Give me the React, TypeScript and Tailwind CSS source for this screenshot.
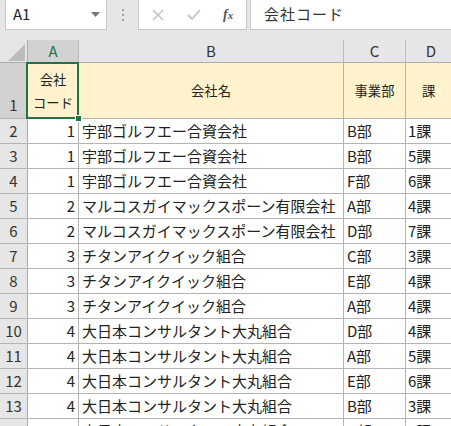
import React from 'react'

const font = { fontFamily: '"Noto Sans CJK JP", "Noto Sans", sans-serif' }

const rows = [
  ['1', '宇部ゴルフエー合資会社', 'B部', '1課'],
  ['1', '宇部ゴルフエー合資会社', 'B部', '5課'],
  ['1', '宇部ゴルフエー合資会社', 'F部', '6課'],
  ['2', 'マルコスガイマックスポーン有限会社', 'A部', '4課'],
  ['2', 'マルコスガイマックスポーン有限会社', 'D部', '7課'],
  ['3', 'チタンアイクイック組合', 'C部', '3課'],
  ['3', 'チタンアイクイック組合', 'E部', '4課'],
  ['3', 'チタンアイクイック組合', 'A部', '4課'],
  ['4', '大日本コンサルタント大丸組合', 'D部', '4課'],
  ['4', '大日本コンサルタント大丸組合', 'A部', '5課'],
  ['4', '大日本コンサルタント大丸組合', 'E部', '6課'],
  ['4', '大日本コンサルタント大丸組合', 'B部', '3課'],
  ['4', '大日本コンサルタント大丸組合', 'C部', '2課'],
]

const grid = 'grid grid-cols-[28px_51px_265px_62px_60px]'

export default function App() {
  return (
    <div className="w-[451px] h-[426px] overflow-hidden bg-[#e6e6e6] text-[#222]" style={font}>
      {/* formula bar */}
      <div className="flex h-[40px] items-start">
        <div className="ml-[5px] flex h-[30px] w-[102px] items-center justify-between border border-t-0 border-[#c6c6c6] bg-white pl-[7px] pr-[6px] text-[15px]">
          <span>A1</span>
          <svg width="9" height="5" viewBox="0 0 9 5">
            <path d="M0 0h9L4.5 5z" fill="#777" />
          </svg>
        </div>
        <div className="flex w-[31px] flex-col items-center gap-[3px] pt-[9px]">
          <span className="h-[2px] w-[2px] bg-[#a0a0a0]" />
          <span className="h-[2px] w-[2px] bg-[#a0a0a0]" />
          <span className="h-[2px] w-[2px] bg-[#a0a0a0]" />
        </div>
        <div className="flex h-[30px] w-[109px] items-center border border-t-0 border-[#c6c6c6] bg-white">
          <svg className="ml-[13px]" width="12" height="12" viewBox="0 0 12 12">
            <path d="M1 1l10 10M11 1L1 11" stroke="#c4c4c4" strokeWidth="1.6" />
          </svg>
          <svg className="ml-[23px]" width="14" height="11" viewBox="0 0 14 11">
            <path d="M1 6l4 4 8-9" stroke="#c4c4c4" strokeWidth="1.8" fill="none" />
          </svg>
          <span
            className="ml-[22px] text-[14px] italic text-[#555]"
            style={{ fontFamily: '"Liberation Serif", serif', fontWeight: 700 }}
          >
            f<span className="text-[11px]">x</span>
          </span>
        </div>
        <div className="ml-[3px] flex h-[30px] flex-1 items-center border border-t-0 border-r-0 border-[#c6c6c6] bg-white pl-[13px] text-[15px] tracking-[1px] text-[#333]">
          会社コード
        </div>
      </div>

      {/* column headers */}
      <div className={`${grid} h-[23px] border-b border-[#ababab] text-[15px]`}>
        <div className="relative border-r border-[#ababab]">
          <svg className="absolute left-[8px] top-[4px]" width="17" height="17" viewBox="0 0 17 17">
            <path d="M17 0V17H0z" fill="#bcbcbc" />
          </svg>
        </div>
        <div className="flex items-center justify-center border-r border-[#bcbcbc] bg-[#d2d2d2] text-[#217346]">A</div>
        <div className="flex items-center justify-center border-r border-[#bcbcbc] text-[#333]">B</div>
        <div className="flex items-center justify-center border-r border-[#bcbcbc] text-[#333]">C</div>
        <div className="flex items-center justify-center pr-[10px] text-[#333]">D</div>
      </div>

      {/* row 1 */}
      <div className={`${grid} h-[56px] border-b border-[#b4b4b4] text-[13.3px]`}>
        <div className="flex items-end justify-center border-r border-[#ababab] bg-[#d2d2d2] pb-[2px] text-[15px] text-[#333]">1</div>
        <div className="relative flex flex-col items-center justify-center border-r border-[#b4b4b4] bg-[#fff2cc] leading-[23px]">
          <span>会社</span>
          <span>コード</span>
          <div className="absolute -left-[2px] -top-[1px] -right-[1px] -bottom-[1px] border-2 border-[#217346]" />
          <div className="absolute -right-[4px] -bottom-[4px] h-[7px] w-[7px] border border-white bg-[#217346]" />
        </div>
        <div className="flex items-center justify-center border-r border-[#b4b4b4] bg-[#fff2cc]">会社名</div>
        <div className="flex items-center justify-center border-r border-[#b4b4b4] bg-[#fff2cc]">事業部</div>
        <div className="flex items-center bg-[#fff2cc] pl-[16px]">課</div>
      </div>

      {/* data rows */}
      {rows.map((r, i) => (
        <div key={i} className={`${grid} h-[25px] border-b border-[#b4b4b4] text-[15px] leading-[24px]`}>
          <div className="flex items-center justify-center border-r border-[#ababab] text-[#333]">{i + 2}</div>
          <div className="border-r border-[#b4b4b4] bg-white pr-[3px] text-right">{r[0]}</div>
          <div className="whitespace-nowrap border-r border-[#b4b4b4] bg-white pl-[3px]">{r[1]}</div>
          <div className="border-r border-[#b4b4b4] bg-white pl-[3px]">{r[2]}</div>
          <div className="bg-white pl-[2px]">{r[3]}</div>
        </div>
      ))}
    </div>
  )
}
